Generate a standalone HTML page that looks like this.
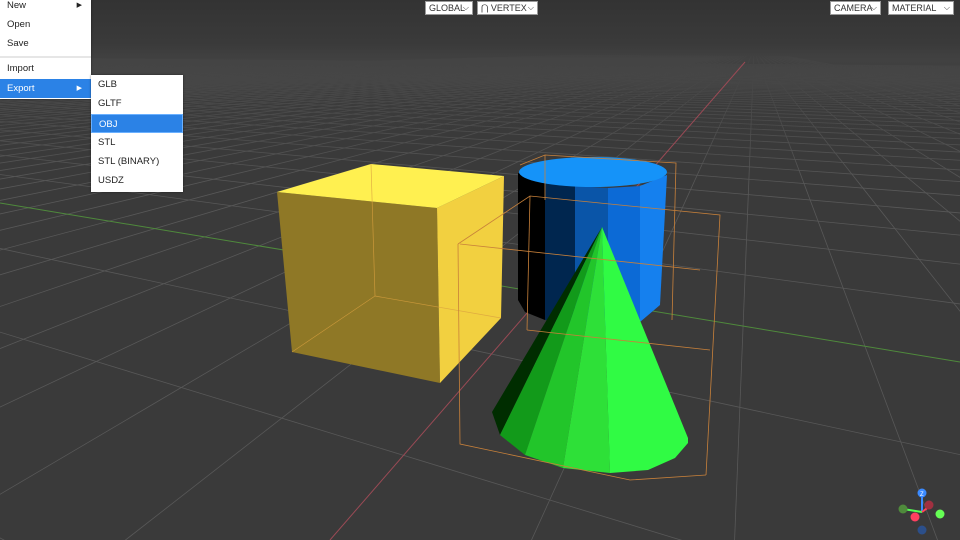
<!DOCTYPE html>
<html style="overflow:hidden"><head><meta charset="utf-8"><style>
html,body{margin:0;width:960px;height:540px;overflow:hidden}
body{background:#3a3a3a;font-family:"Liberation Sans",Arial,sans-serif;position:relative}
svg{position:absolute;left:0;top:0}
.menu{position:absolute;background:#fff;font-size:9.5px;color:#222;box-shadow:0 0 2px rgba(0,0,0,.5)}
.it{position:absolute;left:0;right:0;height:19px;line-height:19px;padding-left:7px;box-sizing:border-box}
.hl{background:#2b82e6;color:#fff}
.sel{position:absolute;top:1px;height:14px;background:#fff;border:1px solid #999;box-sizing:border-box;font-size:9px;color:#333;line-height:12px;padding-left:3px}
.sel b{position:absolute;right:3px;top:0;font-weight:normal;font-size:8px}
</style></head><body>
<svg id="s" width="960" height="540">
<defs><linearGradient id="fog" x1="0" y1="0" x2="0" y2="1">
<stop offset="0" stop-color="#333"/><stop offset="0.08" stop-color="#3a3a3a"/><stop offset="0.11" stop-color="#424242" stop-opacity="0.9"/><stop offset="0.2" stop-color="#3c3c3c" stop-opacity="0.5"/><stop offset="0.35" stop-color="#3a3a3a" stop-opacity="0"/></linearGradient></defs>
<g id="grid"></g>
<rect x="0" y="0" width="960" height="540" fill="url(#fog)"/>
<line x1="330" y1="540" x2="745" y2="62" stroke="#9a4a55" stroke-width="1"/>
<line x1="0" y1="203" x2="960" y2="362" stroke="#4f8a3c" stroke-width="1"/>
<polygon points="277,192 437,208 440,383 292,352" fill="#8f7826"/>
<polygon points="437,208 504,176 501,318 440,383" fill="#f2d040"/>
<polygon points="277,192 371,164 504,176 437,208" fill="#fff050"/>
<g stroke="#d9a040" stroke-width="0.7" fill="none" opacity="0.8"><polyline points="371,164 375,296 292,352"/><line x1="375" y1="296" x2="501" y2="318"/></g>
<polygon points="518,173 545,180 545,320 525,312 518,300" fill="#000"/>
<polygon points="545,180 575,186 575,324 545,320" fill="#00264f"/>
<polygon points="575,186 608,188 608,326 575,324" fill="#0a55a8"/>
<polygon points="608,188 640,186 640,322 608,326" fill="#0c6ad6"/>
<polygon points="640,186 667,175 660,305 640,322" fill="#1580ee"/>
<ellipse cx="593" cy="172" rx="74" ry="15" fill="#1593f9"/>
<polygon points="602,227 492,412 500,435" fill="#002d00"/>
<polygon points="602,227 500,435 525,455" fill="#129a1a"/>
<polygon points="602,227 525,455 563,468" fill="#22c52a"/>
<polygon points="602,227 563,468 610,473" fill="#2ee038"/>
<polygon points="602,227 610,473 648,470 675,458 688,443 688,438" fill="#30fb44"/>
<g stroke="#c8813a" stroke-width="0.8" fill="none">
<polyline points="520,165 545,155 676,163 672,320"/>
<line x1="545" y1="155" x2="545" y2="200"/>
<polyline points="458,244 530,196 720,215 706,475"/>
<polyline points="458,244 460,444 630,480 706,475"/>
<line x1="460" y1="244" x2="700" y2="270"/>
<line x1="530" y1="196" x2="527" y2="330"/>
<line x1="527" y1="330" x2="710" y2="350"/>
</g>
<line x1="922" y1="493" x2="922" y2="512" stroke="#3a8aff" stroke-width="2"/>
<line x1="922" y1="512" x2="903" y2="509" stroke="#5f5" stroke-width="2"/>
<line x1="922" y1="512" x2="930" y2="506" stroke="#f45" stroke-width="2"/>
<circle cx="922" cy="493" r="4.5" fill="#3a8aff"/>
<circle cx="929" cy="505" r="4.5" fill="#a03040"/>
<circle cx="903" cy="509" r="4.5" fill="#4f8a3c"/>
<circle cx="940" cy="514" r="4.5" fill="#66ff55"/>
<circle cx="915" cy="517" r="4.5" fill="#ff4060"/>
<circle cx="922" cy="530" r="4.5" fill="#2c4f8a"/>
<text x="920" y="496" font-size="6" fill="#fff">Z</text>
</svg>
<div class="menu" style="left:0;top:0;width:91px;height:99px">
<div class="it" style="top:-4px">New<span style="position:absolute;right:9px;font-size:7px">▶</span></div>
<div class="it" style="top:15px">Open</div>
<div class="it" style="top:34px">Save</div>
<div style="position:absolute;top:56px;left:0;right:0;height:2px;background:#e6e6e6"></div>
<div class="it" style="top:59px">Import</div>
<div class="it hl" style="top:79px">Export<span style="position:absolute;right:9px;font-size:7px">▶</span></div>
</div>
<div class="menu" style="left:91px;top:75px;width:92px;height:117px">
<div class="it" style="top:0">GLB</div>
<div class="it" style="top:19px">GLTF</div>
<div class="it hl" style="top:39px;border:1px solid #6ab0ff">OBJ</div>
<div class="it" style="top:58px">STL</div>
<div class="it" style="top:77px">STL (BINARY)</div>
<div class="it" style="top:96px">USDZ</div>
</div>
<div class="sel" style="left:425px;width:48px">GLOBAL<b>⌵</b></div>
<div class="sel" style="left:477px;width:61px">⋂ VERTEX<b>⌵</b></div>
<div class="sel" style="left:830px;width:51px">CAMERA<b>⌵</b></div>
<div class="sel" style="left:888px;width:66px">MATERIAL<b>⌵</b></div>
<script>
(function(){
var O=[543,293],Vg=[-924,50],Vr=[754,50],sg=0.06,sr=0.2,g=document.getElementById('grid'),h='';
function P(u,v){var w=sg*u+sr*v+1;return [(sg*u*Vg[0]+sr*v*Vr[0]+O[0])/w,(sg*u*Vg[1]+sr*v*Vr[1]+O[1])/w,w];}
function seg(a,b){return '<line x1="'+a[0].toFixed(1)+'" y1="'+a[1].toFixed(1)+'" x2="'+b[0].toFixed(1)+'" y2="'+b[1].toFixed(1)+'"/>';}
for(var u=-15;u<=80;u++){if(u==0)continue;var vmin=(0.03-1-sg*u)/sr;var a=P(u,Math.max(vmin,-200)),b=P(u,200);h+=seg(a,b);}
for(var v=-4;v<=80;v++){if(v==0)continue;var umin=(0.03-1-sr*v)/sg;var a=P(Math.max(umin,-500),v),b=P(600,v);h+=seg(a,b);}
g.innerHTML='<g stroke="#585858" stroke-width="0.8">'+h+'</g>';
})();
</script>
</body></html>
